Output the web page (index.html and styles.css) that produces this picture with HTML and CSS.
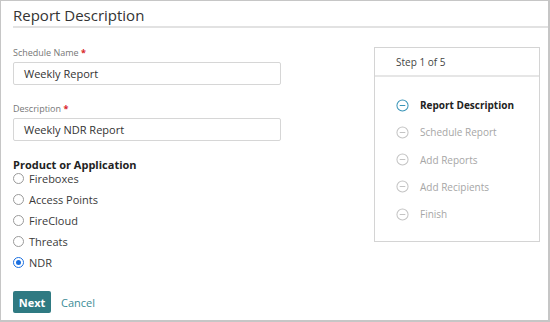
FILE: index.html
```html
<!DOCTYPE html>
<html>
<head>
<meta charset="utf-8">
<link rel="stylesheet" href="styles.css">
</head>
<body>
<div class="frame">
  <h1 class="title">Report Description</h1>
  <div class="content">
    <form class="form">
      <div class="field">
        <label class="label">Schedule Name <span class="req">*</span></label>
        <div class="input">Weekly Report</div>
      </div>
      <div class="field">
        <label class="label">Description <span class="req">*</span></label>
        <div class="input">Weekly NDR Report</div>
      </div>
      <div class="group">
        <div class="group-title">Product or Application</div>
        <label class="radio"><span class="dot"></span>Fireboxes</label>
        <label class="radio"><span class="dot"></span>Access Points</label>
        <label class="radio"><span class="dot"></span>FireCloud</label>
        <label class="radio"><span class="dot"></span>Threats</label>
        <label class="radio"><span class="dot on"></span>NDR</label>
      </div>
      <div class="actions">
        <button type="button" class="btn">Next</button>
        <a class="cancel">Cancel</a>
      </div>
    </form>
    <aside class="steps">
      <div class="steps-head">Step 1 of 5</div>
      <ul class="steps-list">
        <li class="step active"><svg class="ico" viewBox="0 0 14 14"><circle cx="7" cy="7" r="6" fill="none" stroke="currentColor" stroke-width="1.1"/><line x1="4" y1="7" x2="10" y2="7" stroke="currentColor" stroke-width="1.1"/></svg>Report Description</li>
        <li class="step"><svg class="ico" viewBox="0 0 14 14"><circle cx="7" cy="7" r="6" fill="none" stroke="currentColor" stroke-width="1.1"/><line x1="4" y1="7" x2="10" y2="7" stroke="currentColor" stroke-width="1.1"/></svg>Schedule Report</li>
        <li class="step"><svg class="ico" viewBox="0 0 14 14"><circle cx="7" cy="7" r="6" fill="none" stroke="currentColor" stroke-width="1.1"/><line x1="4" y1="7" x2="10" y2="7" stroke="currentColor" stroke-width="1.1"/></svg>Add Reports</li>
        <li class="step"><svg class="ico" viewBox="0 0 14 14"><circle cx="7" cy="7" r="6" fill="none" stroke="currentColor" stroke-width="1.1"/><line x1="4" y1="7" x2="10" y2="7" stroke="currentColor" stroke-width="1.1"/></svg>Add Recipients</li>
        <li class="step"><svg class="ico" viewBox="0 0 14 14"><circle cx="7" cy="7" r="6" fill="none" stroke="currentColor" stroke-width="1.1"/><line x1="4" y1="7" x2="10" y2="7" stroke="currentColor" stroke-width="1.1"/></svg>Finish</li>
      </ul>
    </aside>
  </div>
</div>
</body>
</html>
```
FILE: styles.css
```css
* { box-sizing: border-box; }
html, body { margin: 0; padding: 0; background: #fff; }
body { font-family: "Open Sans", "Liberation Sans", sans-serif; color: #333; }
.frame {
  width: 550px; height: 322px;
  border-top: 1px solid #c6c6c6; border-left: 1px solid #c6c6c6;
  border-right: 2px solid #c6c6c6; border-bottom: 2px solid #c6c6c6;
  padding-left: 12px;
}
.title {
  margin: 0; font-size: 15px; font-weight: 400; color: #333;
  line-height: 20px; padding-top: 4px; height: 27px;
  border-bottom: 2px solid #e2e2e2;
}
.content { display: flex; padding-top: 19px; }
.form { width: 268px; display: flex; flex-direction: column; }
.field { display: flex; flex-direction: column; margin-bottom: 18px; }
.field + .field { margin-bottom: 14px; }
.label { font-size: 9px; color: #777; line-height: 12px; margin-bottom: 3px; }
.req { color: #d9262b; font-weight: 700; }
.input {
  height: 23px; border: 1px solid #d6d6d6; border-radius: 2px;
  font-size: 11px; color: #333; line-height: 21px; padding-left: 10px;
}
.group { margin-top: 3px; }
.group-title { font-size: 11px; font-weight: 700; color: #222; line-height: 13px; margin-bottom: 0; }
.radio { display: flex; align-items: center; font-size: 11px; color: #3a3a3a; height: 14px; margin-bottom: 7px; }
.dot {
  width: 11px; height: 11px; border: 1px solid #9a9a9a; border-radius: 50%;
  margin-right: 5px; flex: none; position: relative;
}
.dot.on { border-color: #1a6fe0; }
.dot.on::after {
  content: ""; position: absolute; left: 2px; top: 2px; width: 5px; height: 5px;
  border-radius: 50%; background: #1a6fe0;
}
.actions { display: flex; align-items: center; margin-top: 15px; }
.btn {
  width: 38px; height: 22px; border: none; border-radius: 2px;
  background: #2f7a82; color: #fff; font-family: inherit; font-size: 11px;
  font-weight: 700; padding: 0; margin-right: 10px;
}
.cancel { font-size: 11px; color: #3b8c97; }
.steps {
  margin-left: auto; margin-right: 8px; width: 166px; height: 195px;
  border: 1px solid #d4d4d4; align-self: flex-start;
}
.steps-head {
  font-size: 10px; color: #444; height: 29px; line-height: 29px; padding-left: 21px;
  border-bottom: 2px solid #e6e6e6;
}
.steps-list { list-style: none; margin: 0; padding: 21px 0 0 21px; }
.step { display: flex; align-items: center; font-size: 10px; color: #a6a6a6; height: 14px; margin-bottom: 13.25px; }
.step.active { color: #222; font-weight: 700; }
.ico { width: 13px; height: 13px; margin-right: 11px; color: #c4c4c4; flex: none; }
.step.active .ico { color: #3a95b8; }
```
